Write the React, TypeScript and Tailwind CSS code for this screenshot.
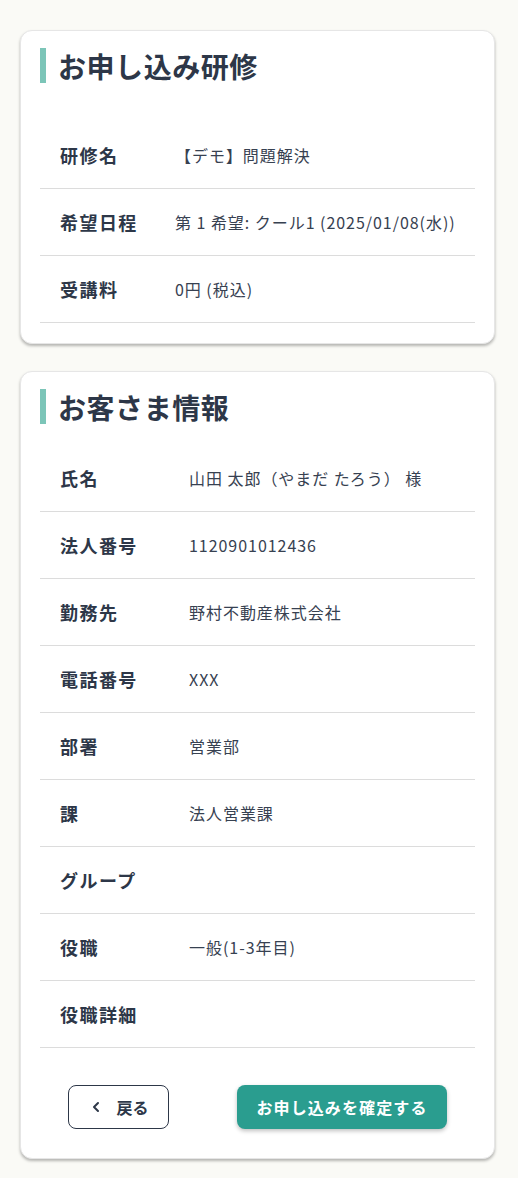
import { ChevronLeft } from 'lucide-react'

const course = [
  { label: '研修名', value: '【デモ】問題解決' },
  { label: '希望日程', value: '第 1 希望: クール1 (2025/01/08(水))' },
  { label: '受講料', value: '0円 (税込)' },
]

const customer = [
  { label: '氏名', value: '山田 太郎（やまだ たろう） 様' },
  { label: '法人番号', value: '1120901012436' },
  { label: '勤務先', value: '野村不動産株式会社' },
  { label: '電話番号', value: 'XXX' },
  { label: '部署', value: '営業部' },
  { label: '課', value: '法人営業課' },
  { label: 'グループ', value: '' },
  { label: '役職', value: '一般(1-3年目)' },
  { label: '役職詳細', value: '' },
]

function SectionTitle({ children }: { children: string }) {
  return (
    <div className="flex h-[35px] items-center">
      <span className="h-full w-[6px] bg-[#7cc5b8]" />
      <h2 className="ml-3 text-[28px] font-bold leading-none tracking-[0.02em] text-[#2d3748]">{children}</h2>
    </div>
  )
}

function Row({ label, value, labelWidth }: { label: string; value: string; labelWidth: string }) {
  return (
    <div className="flex h-[67px] items-center border-b border-[#dcdcdc] pl-5">
      <span className={`${labelWidth} shrink-0 text-[18px] font-bold tracking-[0.08em] text-[#2d3748]`}>{label}</span>
      <span className="text-[16px] tracking-[0.06em] text-[#374151]">{value}</span>
    </div>
  )
}

export default function App() {
  return (
    <div
      className="min-h-[1178px] bg-[#fafaf6] pt-[30px] pr-[23px] pb-5 pl-5"
      style={{ fontFamily: '"Noto Sans CJK JP", "Noto Sans", sans-serif' }}
    >
      {/* お申し込み研修 */}
      <section className="rounded-xl border border-[#e6e6e6] bg-white px-[19px] pt-[17px] pb-[20px] shadow-[0_2px_3px_rgba(0,0,0,0.28)]">
        <SectionTitle>お申し込み研修</SectionTitle>
        <div className="mt-[39px]">
          {course.map((r) => (
            <Row key={r.label} label={r.label} value={r.value} labelWidth="w-[115px]" />
          ))}
        </div>
      </section>

      {/* お客さま情報 */}
      <section className="mt-[27px] rounded-xl border border-[#e6e6e6] bg-white px-[19px] pt-[17px] pb-[29px] shadow-[0_2px_3px_rgba(0,0,0,0.28)]">
        <SectionTitle>お客さま情報</SectionTitle>
        <div className="mt-[21px]">
          {customer.map((r) => (
            <Row key={r.label} label={r.label} value={r.value} labelWidth="w-[129px]" />
          ))}
        </div>

        {/* Actions */}
        <div className="mt-[37px] flex items-center justify-between px-[28px]">
          <button className="flex h-[44px] w-[101px] items-center justify-center gap-3 rounded-lg border border-[#2d3748] bg-white text-[16px] font-bold text-[#2d3748]">
            <ChevronLeft className="h-4 w-4" strokeWidth={3} />
            戻る
          </button>
          <button className="h-[44px] w-[210px] rounded-lg bg-[#2a9d8f] text-[16px] font-bold tracking-[0.07em] text-white shadow-[0_2px_4px_rgba(0,0,0,0.25)]">
            お申し込みを確定する
          </button>
        </div>
      </section>
    </div>
  )
}
